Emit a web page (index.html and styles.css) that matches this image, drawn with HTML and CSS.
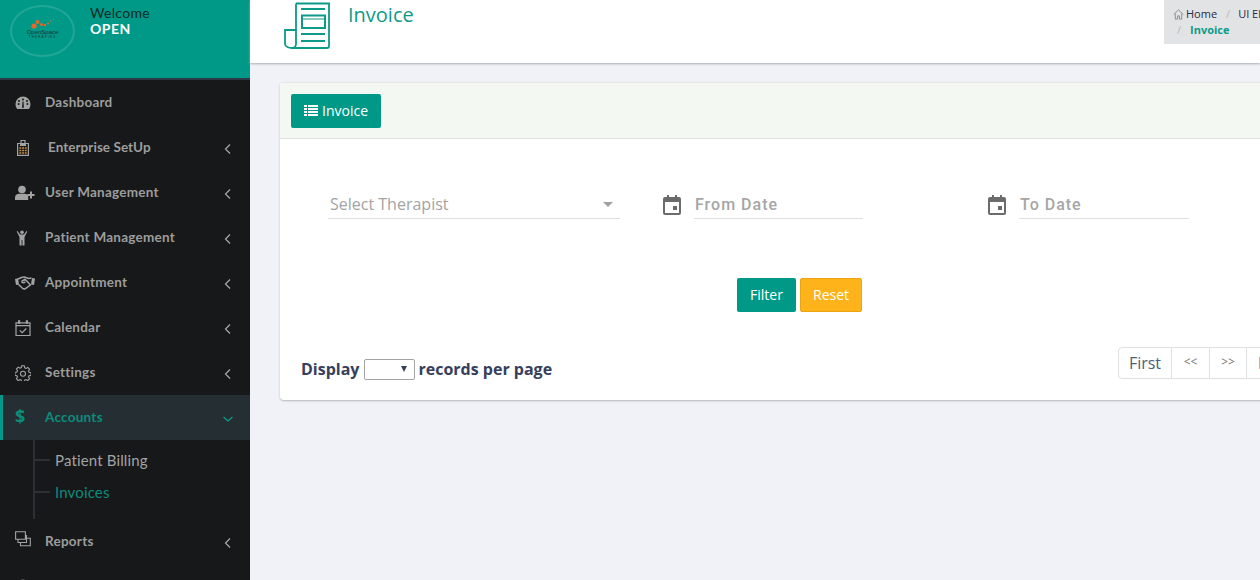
FILE: index.html
```html
<!DOCTYPE html>
<html lang="en">
<head>
    <title>Invoice</title>
    <link rel="stylesheet" href="styles.css">
</head>
<body>
    <aside class="sidebar">
        <div class="profile">
            <div class="logo">
                <svg class="logo-mark" viewBox="0 0 24 11" width="24" height="11">
                    <circle cx="3" cy="8" r="2.600" fill="#e8682a"/>
                    <circle cx="6.500" cy="4" r="2" fill="#e8682a"/>
                    <circle cx="10.500" cy="6.500" r="1.500" fill="#e8682a"/>
                    <circle cx="14" cy="7" r="1.200" fill="#e8682a"/>
                    <circle cx="17" cy="5.500" r="1" fill="#e8682a"/>
                    <circle cx="20" cy="3" r=".8" fill="#e8682a"/>
                    <circle cx="22.500" cy="1.200" r=".6" fill="#e8682a"/>
                </svg>
                <span class="logo-name">OpenSpace</span>
                <span class="logo-sub">THERAPIES</span>
            </div>
            <div class="welcome">
                <div class="welcome-label">Welcome</div>
                <div class="welcome-name">OPEN</div>
            </div>
        </div>

        <nav class="menu">
            <a class="menu-item">
                <svg class="menu-icon" viewBox="0 0 16 16"><path fill="#a3a3a3" fill-rule="evenodd" d="M8 1.500A7.500 7.500 0 0 0 .5 9c0 1.900.6 3.500 1.600 4.900h11.800A7.500 7.500 0 0 0 15.500 9 7.500 7.500 0 0 0 8 1.500zM4 5a1 1 0 1 1 0 2 1 1 0 0 1 0-2zm4-1.500a1 1 0 1 1 0 2 1 1 0 0 1 0-2zM2.600 9a1 1 0 1 1 2 0 1 1 0 0 1-2 0zm6.300 3.800H7.100L7.500 6.500h1zM12 5a1 1 0 1 1 0 2 1 1 0 0 1 0-2zm1.400 4a1 1 0 1 1-2 0 1 1 0 0 1 2 0z"/></svg>
                <span class="menu-label">Dashboard</span>
            </a>
            <a class="menu-item">
                <svg class="menu-icon" viewBox="0 0 16 16"><path fill="none" stroke="#a3a3a3" stroke-width="1.200" d="M2.600 3.500h10.800v11.900H2.600z"/><path fill="none" stroke="#a3a3a3" stroke-width="1.200" d="M6 3.500v-3h4v3"/><path fill="#a3a3a3" d="M5 4h6v2H5z"/><path stroke="#c58a3e" stroke-width="1.300" stroke-dasharray="2 .8" d="M4.300 8h7.400M4.300 10.500h7.400M4.300 13h7.400"/></svg>
                <span class="menu-label menu-label-wide">Enterprise SetUp</span>
                <svg class="chevron" viewBox="0 0 8 12"><path d="M6 1.500 1.500 6 6 10.500"/></svg>
            </a>
            <a class="menu-item">
                <svg class="menu-icon menu-icon-wide" viewBox="0 0 20 16"><circle cx="7" cy="4.500" r="3.800" fill="#a3a3a3"/><path fill="#a3a3a3" d="M0 15v-2.500C0 10 2 8.800 4 8.800h6c1.500 0 2.500.7 3.200 1.700V15z"/><path stroke="#a3a3a3" stroke-width="2" d="M16 6.500v7M12.500 10h7"/></svg>
                <span class="menu-label">User Management</span>
                <svg class="chevron" viewBox="0 0 8 12"><path d="M6 1.500 1.500 6 6 10.500"/></svg>
            </a>
            <a class="menu-item">
                <svg class="menu-icon" viewBox="0 0 16 16"><circle cx="7" cy="2.300" r="1.800" fill="#a3a3a3"/><path fill="#a3a3a3" d="M2.500 1 5 4.500h4L11.500 1l.8.5L9.500 7v8.500H7.400V10h-.8v5.500H4.500V7L1.700 1.500z"/></svg>
                <span class="menu-label">Patient Management</span>
                <svg class="chevron" viewBox="0 0 8 12"><path d="M6 1.500 1.500 6 6 10.500"/></svg>
            </a>
            <a class="menu-item">
                <svg class="menu-icon menu-icon-wide" viewBox="0 0 20 14"><path fill="#a3a3a3" d="M0 3l3-.7 1 6.200-3 .6zM20 2.500l-3-.5-1 6.500 3 .5z"/><path fill="none" stroke="#a3a3a3" stroke-width="1.500" d="M3 3l3.500-1.500c2-.8 3.500-.6 5 .2l2 .7 3-.4M3.500 8.500l4 3.800c1 .8 2 .8 3 .2l5.500-4"/><path fill="none" stroke="#a3a3a3" stroke-width="1.500" d="M6.500 5.500 10 3.300l5.500 5.700M6.500 5.500c.8 1.500 2.500 1.500 3.800.2"/></svg>
                <span class="menu-label">Appointment</span>
                <svg class="chevron" viewBox="0 0 8 12"><path d="M6 1.500 1.500 6 6 10.500"/></svg>
            </a>
            <a class="menu-item">
                <svg class="menu-icon" viewBox="0 0 16 16"><path fill="none" stroke="#a3a3a3" stroke-width="1.200" d="M1 2.800h14v12.700H1z"/><path fill="#a3a3a3" d="M1 5h14v1.300H1zM3 .3h2.200v3.500H3zM10.800 .3H13v3.500h-2.200z"/><path fill="none" stroke="#a3a3a3" stroke-width="1.200" d="m4.800 10.500 2.400 2.200L11.300 8.500"/></svg>
                <span class="menu-label">Calendar</span>
                <svg class="chevron" viewBox="0 0 8 12"><path d="M6 1.500 1.500 6 6 10.500"/></svg>
            </a>
            <a class="menu-item">
                <svg class="menu-icon" viewBox="0 0 16 16"><path fill="none" stroke="#a3a3a3" stroke-width="1.100" d="M6.700 .8h2.600l.4 2 1.300.6 1.800-1 1.800 1.900-1.100 1.700.6 1.300 2 .4v2.600l-2 .4-.6 1.300 1.100 1.700-1.800 1.900-1.800-1-1.300.6-.4 2H6.700l-.4-2-1.300-.6-1.800 1-1.800-1.900 1.100-1.700-.6-1.300-2-.4V7.500l2-.4.6-1.300-1.100-1.700 1.800-1.900 1.800 1 1.300-.6z"/><circle cx="8" cy="8.800" r="2.500" fill="none" stroke="#a3a3a3" stroke-width="1.100"/></svg>
                <span class="menu-label">Settings</span>
                <svg class="chevron" viewBox="0 0 8 12"><path d="M6 1.500 1.500 6 6 10.500"/></svg>
            </a>
            <a class="menu-item menu-item-active">
                <span class="menu-dollar">$</span>
                <span class="menu-label">Accounts</span>
                <svg class="chevron chevron-open" viewBox="0 0 12 8"><path d="M1.500 2 6 6l4.500-4"/></svg>
            </a>
            <div class="submenu">
                <a class="submenu-item">Patient Billing</a>
                <a class="submenu-item submenu-item-active">Invoices</a>
            </div>
            <a class="menu-item">
                <svg class="menu-icon menu-icon-up" viewBox="0 0 16 16"><path fill="none" stroke="#a3a3a3" stroke-width="1.100" d="M.6 .8h9.800v7.500H.6zM3 8.500v3h8.500V4M5.500 11.700v3h9.800V7.300h-3.800"/></svg>
                <span class="menu-label">Reports</span>
                <svg class="chevron" viewBox="0 0 8 12"><path d="M6 1.500 1.500 6 6 10.500"/></svg>
            </a>
            <a class="menu-item">
                <svg class="menu-icon" viewBox="0 0 16 16"><circle cx="8" cy="4" r="3.500" fill="#a3a3a3"/></svg>
            </a>
        </nav>
    </aside>

    <main class="main">
        <header class="topbar">
            <div class="page-title">
                <svg class="title-icon" viewBox="0 0 48 48" width="48" height="48">
                    <g fill="none" stroke="#0e9a89" stroke-width="1.800">
                        <path d="M13 1.500h33v42.500a2 2 0 0 1-2 2H8"/>
                        <path d="M13 1.500V42c0 2.500-2 4-4 4-3 0-7-1.500-7-4V28h11"/>
                        <path d="M18 7h24M18 32h24M18 39h24"/>
                        <path stroke-width="2" d="M19 13.500h23V26H19z"/>
                        <path stroke-width="1" d="M19 17h23"/>
                    </g>
                </svg>
                <h1 class="title">Invoice</h1>
            </div>
            <div class="breadcrumb">
                <div class="crumb-row">
                    <svg class="crumb-home" viewBox="0 0 12 12"><path fill="none" stroke="#888" d="M.8 6 6 1l5.200 5M2.500 5v6h2.500V7.500h2V11h2.500V5"/></svg>
                    <span class="crumb">Home</span>
                    <span class="crumb-sep">/</span>
                    <span class="crumb">UI Elements</span>
                </div>
                <div class="crumb-row crumb-row-second">
                    <span class="crumb-sep">/</span>
                    <span class="crumb-current">Invoice</span>
                </div>
            </div>
        </header>

        <section class="content">
            <div class="card">
                <div class="card-head">
                    <button class="btn btn-teal btn-head">
                        <svg class="list-icon" viewBox="0 0 14 11" width="14" height="11"><path fill="#fff" d="M0 0h3v2H0zM4 0h10v2H4zM0 3h3v2H0zM4 3h10v2H4zM0 6h3v2H0zM4 6h10v2H4zM0 9h3v2H0zM4 9h10v2H4z"/></svg>
                        Invoice
                    </button>
                </div>
                <div class="card-body">
                    <div class="filters">
                        <div class="field field-select">
                            <span class="placeholder">Select Therapist</span>
                            <span class="caret"></span>
                        </div>
                        <div class="date-group date-from">
                            <svg class="date-icon" viewBox="0 0 18 20" width="18" height="20"><path fill="#6b6b6b" fill-rule="evenodd" d="M4 0h2v2h6V0h2v2h2a2 2 0 0 1 2 2v14a2 2 0 0 1-2 2H2a2 2 0 0 1-2-2V4a2 2 0 0 1 2-2h2zM2 7v11h14V7zm8 4h4v4h-4z"/></svg>
                            <div class="field field-date"><span class="date-label">From Date</span></div>
                        </div>
                        <div class="date-group date-to">
                            <svg class="date-icon" viewBox="0 0 18 20" width="18" height="20"><path fill="#6b6b6b" fill-rule="evenodd" d="M4 0h2v2h6V0h2v2h2a2 2 0 0 1 2 2v14a2 2 0 0 1-2 2H2a2 2 0 0 1-2-2V4a2 2 0 0 1 2-2h2zM2 7v11h14V7zm8 4h4v4h-4z"/></svg>
                            <div class="field field-date"><span class="date-label">To Date</span></div>
                        </div>
                    </div>
                    <div class="actions">
                        <button class="btn btn-teal btn-action">Filter</button>
                        <button class="btn btn-amber btn-action">Reset</button>
                    </div>
                    <div class="table-bar">
                        <div class="page-size">
                            Display
                            <span class="size-select"><span class="size-arrow"></span></span>
                            records per page
                        </div>
                        <div class="pager">
                            <a class="pager-item pager-first">First</a>
                            <a class="pager-item pager-small pager-prev">&lt;&lt;</a>
                            <a class="pager-item pager-small">&gt;&gt;</a>
                            <a class="pager-item pager-last">Last</a>
                        </div>
                    </div>
                </div>
            </div>
        </section>
    </main>
</body>
</html>
```

FILE: styles.css
```css
html, body {
    height: 100%;
}

body {
    display: flex;
    width: 1260px;
    height: 580px;
    margin: 0;
    overflow: hidden;
    background-color: #f0f2f7;
    font-family: "Open Sans", sans-serif;
}

/* sidebar */

.sidebar {
    flex: 0 0 250px;
    width: 250px;
    height: 580px;
    overflow: hidden;
    background-color: #161819;
}

.profile {
    display: flex;
    height: 78px;
    box-sizing: content-box;
    background-color: #009987;
    border-bottom: 2px solid #2c3a47;
}

.logo {
    display: flex;
    flex-direction: column;
    align-items: center;
    flex: 0 0 61px;
    width: 61px;
    height: 48px;
    margin: 5px 0 0 10px;
    border: 2px solid #22a797;
    border-radius: 50%;
    box-sizing: content-box;
    color: #16352f;
}

.logo-mark {
    margin: 11px 0 0 0;
}

.logo-name {
    font-family: "Liberation Sans", sans-serif;
    font-size: 6px;
    line-height: 6px;
}

.logo-sub {
    font-family: "Liberation Sans", sans-serif;
    font-size: 3px;
    line-height: 4px;
    letter-spacing: 1.200px;
}

.welcome {
    margin: 5px 0 0 15px;
    font-family: "Lato", sans-serif;
    font-size: 14px;
    line-height: 16px;
}

.welcome-label {
    color: #062b27;
    letter-spacing: .3px;
}

.welcome-name {
    color: #fff;
    font-weight: 700;
    letter-spacing: .5px;
}

.menu-item {
    display: flex;
    align-items: center;
    height: 45px;
    padding-left: 15px;
    color: #9d9d9d;
    font-family: "Lato", sans-serif;
    font-size: 13.500px;
    font-weight: 700;
    letter-spacing: .25px;
}

.menu-icon {
    flex: 0 0 16px;
    width: 16px;
    height: 16px;
    margin-right: 14px;
}

.menu-icon-wide {
    flex-basis: 20px;
    width: 20px;
    margin-right: 10px;
}

.menu-icon-up {
    margin-top: -5px;
}

.menu-label {
    flex: 1;
    padding-bottom: 2px;
}

.menu-label-wide {
    padding-left: 3px;
    letter-spacing: .05px;
}

.chevron {
    width: 8px;
    height: 12px;
    margin: 3px 18px 0 0;
    fill: none;
    stroke: #a3a3a3;
    stroke-width: 1.300;
}

.chevron-open {
    width: 12px;
    height: 8px;
    margin-right: 16px;
    stroke: #0e9a89;
}

.menu-item-active {
    padding-left: 12px;
    background-color: #242e33;
    border-left: 3px solid #009987;
    color: #0b8c7c;
}

.menu-dollar {
    flex: 0 0 30px;
    margin-top: -4px;
    font-family: "Open Sans", sans-serif;
    font-size: 18px;
    font-weight: 700;
    box-sizing: border-box;
}

.submenu {
    display: flex;
    flex-direction: column;
    height: 79px;
    margin-left: 33px;
    padding-top: 4px;
    box-sizing: border-box;
    border-left: 2px solid #2b3033;
}

.submenu-item {
    display: flex;
    align-items: center;
    height: 32px;
    color: #a3a3a3;
    font-family: "Lato", sans-serif;
    font-size: 15px;
    letter-spacing: .15px;
}

.submenu-item::before {
    content: "";
    width: 15px;
    height: 2px;
    margin-right: 5px;
    background-color: #2b3033;
}

.submenu-item-active {
    color: #0b8c7c;
}

/* header */

.main {
    display: flex;
    flex-direction: column;
    flex: 0 0 1010px;
    width: 1010px;
}

.topbar {
    display: flex;
    justify-content: space-between;
    flex: 0 0 63px;
    height: 63px;
    background-color: #fff;
    box-shadow: 0 1px 2px #a9adb8;
}

.page-title {
    display: flex;
    margin-left: 33px;
}

.title-icon {
    margin-top: 2px;
}

.title {
    margin: 1px 0 0 17px;
    color: #0e9a89;
    font-family: "Open Sans", sans-serif;
    font-size: 20px;
    font-weight: 400;
    line-height: 28px;
}

.breadcrumb {
    flex: 0 0 96px;
    width: 96px;
    height: 44px;
    padding: 6px 0 0 9px;
    overflow: hidden;
    box-sizing: border-box;
    background-color: #e2e3e5;
    white-space: nowrap;
    font-size: 11px;
    line-height: 16px;
}

.crumb-row {
    display: flex;
    align-items: center;
    height: 16px;
}

.crumb-row-second {
    padding-left: 4px;
}

.crumb-home {
    flex: 0 0 11px;
    width: 11px;
    height: 11px;
    margin-right: 2px;
}

.crumb {
    flex-shrink: 0;
    color: #2a2a44;
}

.crumb-sep {
    margin: 0 8px 0 9px;
    color: #bbb;
}

.crumb-row-second .crumb-sep {
    margin: 0 9px 0 0;
}

.crumb-current {
    color: #0e9a89;
    font-weight: 700;
}

/* card */

.content {
    padding: 19px 0 0 30px;
}

.card {
    width: 1040px;
    height: 318px;
    box-sizing: border-box;
    background-color: #fff;
    border-radius: 4px;
    border-top: 1px solid #e6e8ea;
    box-shadow: 0 1px 2px #b4b6ba;
}

.card-head {
    display: flex;
    align-items: center;
    height: 56px;
    padding-left: 11px;
    box-sizing: border-box;
    background-color: #f3f8f3;
    border-bottom: 1px solid #dfe2e0;
}

.btn {
    border: 1px solid transparent;
    border-radius: 2px;
    color: #fff;
    font-family: "Open Sans", sans-serif;
    font-size: 14px;
}

.btn-teal {
    background-color: #009987;
}

.btn-amber {
    background-color: #ffb31a;
    border-color: #eba512;
}

.btn-head {
    display: flex;
    align-items: center;
    justify-content: center;
    gap: 4px;
    width: 90px;
    height: 34px;
    margin-top: 1px;
    padding: 0 0 2px 0;
}

.card-body {
    padding: 0 21px 0 48px;
}

.filters {
    display: flex;
    height: 139px;
    padding-top: 52px;
    box-sizing: border-box;
}

.field {
    display: flex;
    align-items: center;
    height: 28px;
    padding-bottom: 1px;
    box-sizing: border-box;
    border-bottom: 1px solid #dedede;
}

.field-select {
    justify-content: space-between;
    width: 292px;
    padding: 0 7px 1px 2px;
}

.placeholder {
    color: #a3a3a3;
    font-size: 16px;
}

.caret {
    width: 0;
    height: 0;
    border-left: 5px solid transparent;
    border-right: 5px solid transparent;
    border-top: 5px solid #a0a0a0;
}

.date-group {
    display: flex;
    align-items: flex-start;
}

.date-from {
    margin-left: 43px;
}

.date-to {
    margin-left: 125px;
}

.date-icon {
    margin: 4px 13px 0 0;
}

.field-date {
    padding-left: 1px;
}

.date-from .field-date {
    width: 169px;
}

.date-to .field-date {
    width: 170px;
}

.date-label {
    color: #a6a6a6;
    font-family: "Roboto", sans-serif;
    font-size: 16px;
    font-weight: 500;
    letter-spacing: 1px;
}

.actions {
    display: flex;
    gap: 4px;
    padding-left: 409px;
}

.btn-action {
    height: 34px;
    padding: 0 0 2px 0;
}

.btn-teal.btn-action {
    width: 59px;
}

.btn-amber.btn-action {
    width: 62px;
}

.table-bar {
    display: flex;
    justify-content: space-between;
    align-items: flex-start;
    padding-top: 35px;
    margin-left: -27px;
}

.page-size {
    display: flex;
    align-items: center;
    gap: 5px;
    height: 32px;
    margin-top: 6px;
    color: #36405c;
    font-size: 16px;
    font-weight: 700;
}

.size-select {
    position: relative;
    width: 51px;
    height: 21px;
    margin-right: -2px;
    box-sizing: border-box;
    background-color: #fff;
    border: 1px solid #a3a3a3;
    border-radius: 2px;
}

.size-arrow {
    position: absolute;
    top: 6px;
    right: 7px;
    border-left: 3px solid transparent;
    border-right: 3px solid transparent;
    border-top: 6px solid #36405c;
}

.pager {
    display: flex;
    height: 32px;
    box-sizing: border-box;
    background-color: #fff;
    border: 1px solid #dee0e2;
    border-radius: 4px;
    font-size: 16px;
}

.pager-item {
    display: flex;
    align-items: center;
    justify-content: center;
    box-sizing: border-box;
    border-left: 1px solid #dee0e2;
    color: #4a5f7a;
}

.pager-first {
    width: 52px;
    border-left: 0;
}

.pager-small {
    width: 37px;
    padding-bottom: 3px;
    color: #777;
    font-size: 12px;
}

.pager-prev {
    width: 38px;
}

.pager-last {
    width: 52px;
    justify-content: flex-start;
    padding-left: 11px;
    color: #7a3b8f;
}
```
